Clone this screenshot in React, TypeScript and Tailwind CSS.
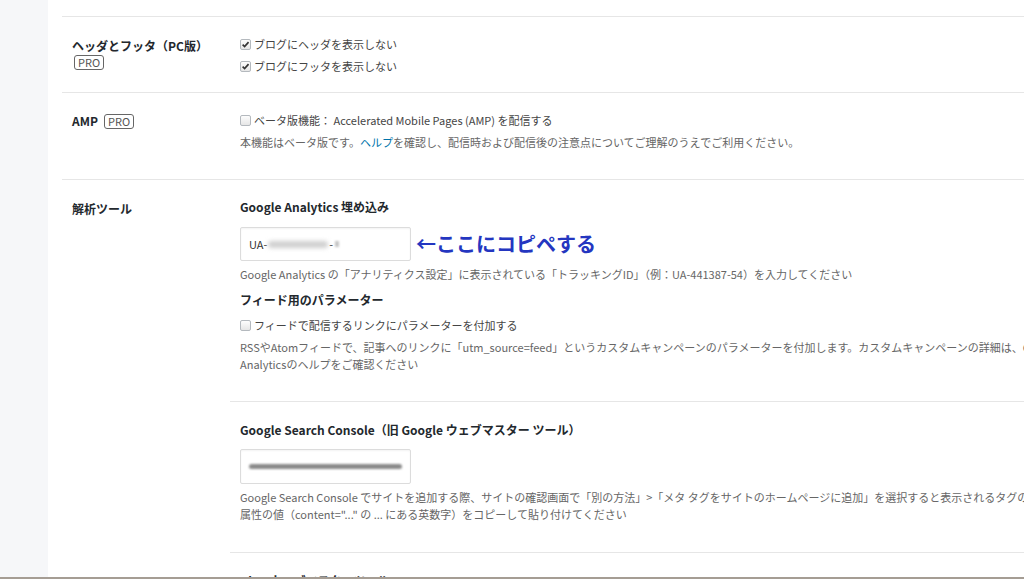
import React from "react";

const font = { fontFamily: '"Noto Sans CJK JP", "Noto Sans", sans-serif' };

const Check = ({ checked }: { checked?: boolean }) => (
  <span className="relative inline-flex h-[11px] w-[11px] shrink-0 items-center justify-center rounded-[2px] border border-[#b4b9be] bg-gradient-to-b from-[#fdfdfd] to-[#e6e6e6]">
    {checked && (
      <svg viewBox="0 0 10 10" className="h-[9px] w-[9px]">
        <path d="M1.8 5.2 L4 7.4 L8.4 2.4" fill="none" stroke="#333" strokeWidth="1.8" />
      </svg>
    )}
  </span>
);

const CheckLine = ({ checked, children }: { checked?: boolean; children: React.ReactNode }) => (
  <div className="flex h-[22px] items-center gap-[3px] whitespace-nowrap text-[11px] text-[#444]">
    <Check checked={checked} />
    <span>{children}</span>
  </div>
);

const Pro = () => (
  <span className="flex h-[15px] w-fit items-center rounded-[3px] border border-[#666] px-[3px] text-[11px] font-normal leading-none text-[#555]">
    PRO
  </span>
);

const Desc = ({ children }: { children: React.ReactNode }) => (
  <div className="whitespace-nowrap text-[11px] leading-[17px] text-[#666]">{children}</div>
);

const Title = ({ children }: { children: React.ReactNode }) => (
  <div className="whitespace-nowrap text-[12px] font-bold leading-[18px] text-[#23282d]">{children}</div>
);

export default function App() {
  return (
    <div className="relative flex h-[579px] w-[1024px] overflow-hidden bg-white" style={font}>
      <div className="w-[48px] shrink-0 bg-[#f6f7f9]" />
      <div className="flex-1 pl-[14px] pt-[16px]">
        {/* header / footer */}
        <div className="flex w-[1100px] border-t border-b border-[#e6e6e6]">
          <div className="w-[168px] shrink-0 pl-[10px] pt-[20px]">
            <Title>ヘッダとフッタ（PC版）</Title>
            <div className="ml-[2px]">
              <Pro />
            </div>
          </div>
          <div className="px-[10px] pt-[16px] pb-[15px]">
            <CheckLine checked>ブログにヘッダを表示しない</CheckLine>
            <CheckLine checked>ブログにフッタを表示しない</CheckLine>
          </div>
        </div>

        {/* AMP */}
        <div className="flex w-[1100px] border-b border-[#e6e6e6]">
          <div className="w-[168px] shrink-0 pl-[10px] pt-[19px]">
            <div className="flex items-center gap-[6px]">
              <Title>AMP</Title>
              <Pro />
            </div>
          </div>
          <div className="px-[10px] pt-[16px] pb-[26px]">
            <CheckLine>ベータ版機能： Accelerated Mobile Pages (AMP) を配信する</CheckLine>
            <div className="flex h-[22px] items-center whitespace-nowrap text-[11px] text-[#666]">
              本機能はベータ版です。<span className="text-[#0073aa]">ヘルプ</span>を確認し、配信時および配信後の注意点についてご理解のうえでご利用ください。
            </div>
          </div>
        </div>

        {/* analytics */}
        <div className="flex w-[1100px]">
          <div className="w-[168px] shrink-0 pl-[10px] pt-[20px]">
            <Title>解析ツール</Title>
          </div>
          <div className="flex-1">
            <div className="border-b border-[#e6e6e6] px-[10px] pt-[18px] pb-[28px]">
              <Title>Google Analytics 埋め込み</Title>
              <div className="mt-[11px] flex items-center">
                <div className="flex h-[34px] w-[171px] items-center rounded-[2px] border border-[#dcdcdc] bg-white px-[8px] text-[11px] text-[#333] shadow-[inset_0_1px_2px_rgba(0,0,0,0.05)]">
                  UA-
                  <span className="mx-[1px] inline-block h-[7px] w-[60px] rounded-full bg-[#cfcfcf] blur-[2px]" />
                  -
                  <span className="ml-[2px] inline-block h-[6px] w-[4px] bg-[#c4c4c4] blur-[1px]" />
                </div>
                <span className="ml-[5px] whitespace-nowrap text-[20px] font-bold leading-none text-[#2436c0]">
                  ←ここにコピペする
                </span>
              </div>
              <div className="mt-[4px] whitespace-nowrap text-[11px] leading-[18px] text-[#666]">
                Google Analytics の「アナリティクス設定」に表示されている「トラッキングID」（例：UA-441387-54）を入力してください
              </div>
              <div className="mt-[8px]">
                <Title>フィード用のパラメーター</Title>
              </div>
              <div className="mt-[5px]">
                <CheckLine>フィードで配信するリンクにパラメーターを付加する</CheckLine>
              </div>
              <div className="mt-[3px]">
                <Desc>RSSやAtomフィードで、記事へのリンクに「utm_source=feed」というカスタムキャンペーンのパラメーターを付加します。カスタムキャンペーンの詳細は、Google</Desc>
                <Desc>Analyticsのヘルプをご確認ください</Desc>
              </div>
            </div>

            <div className="border-b border-[#e6e6e6] px-[10px] pt-[19px] pb-[29px]">
              <Title>Google Search Console（旧 Google ウェブマスター ツール）</Title>
              <div className="mt-[10px] flex h-[35px] w-[171px] items-center rounded-[2px] border border-[#dcdcdc] bg-white px-[8px] shadow-[inset_0_1px_2px_rgba(0,0,0,0.05)]">
                <span className="inline-block h-[5px] w-[154px] rounded-full bg-[#8a8a8a] blur-[1.2px]" />
              </div>
              <div className="mt-[5px]">
                <Desc>Google Search Console でサイトを追加する際、サイトの確認画面で「別の方法」&gt;「メタ タグをサイトのホームページに追加」を選択すると表示されるタグの content</Desc>
                <Desc>属性の値（content="..." の ... にある英数字）をコピーして貼り付けてください</Desc>
              </div>
            </div>

            <div className="px-[10px] pt-[19px]">
              <Title>Bing ウェブマスターツール</Title>
            </div>
          </div>
        </div>
      </div>
      <div className="absolute bottom-0 left-0 h-[2px] w-full bg-[#a59d94]" />
    </div>
  );
}
